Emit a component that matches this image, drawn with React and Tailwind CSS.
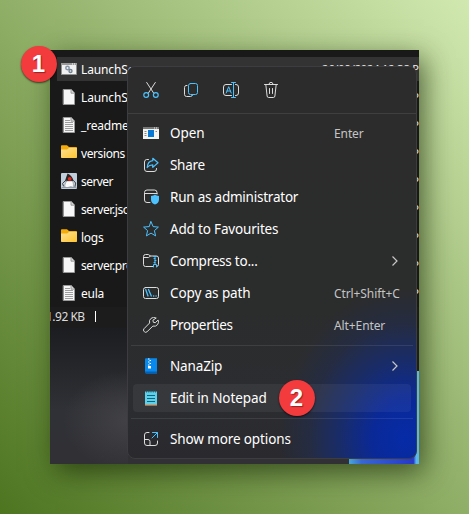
import React from "react";

const BLUE = "#4cc2ff";
const LINE = "#dcdcdc";

function Icon({ children, className = "" }) {
  return (
    <svg
      className={`size-4 shrink-0 ${className}`}
      viewBox="0 0 16 16"
      fill="none"
      stroke={LINE}
      strokeWidth="1"
      strokeLinecap="round"
      strokeLinejoin="round"
    >
      {children}
    </svg>
  );
}

const CutIcon = () => (
  <Icon>
    <path d="M3.7.5 10.6 11M12.3.5 5.4 11" />
    <circle cx="3.2" cy="13" r="2.4" stroke={BLUE} strokeWidth="1.2" />
    <circle cx="12.8" cy="13" r="2.4" stroke={BLUE} strokeWidth="1.2" />
  </Icon>
);
const CopyIcon = () => (
  <Icon>
    <path d="M4 3.500H3A2 2 0 0 0 1.500 5.500v7A2.100 2.100 0 0 0 3.500 14.500h4a2 2 0 0 0 2-1.500" />
    <rect x="5.5" y="1.5" width="9" height="11" rx="2" stroke={BLUE} />
  </Icon>
);
const RenameIcon = () => (
  <Icon>
    <path d="M8.5 2.5H3A2.5 2.5 0 0 0 .5 5v6A2.5 2.5 0 0 0 3 13.5h5.5M12.5 2.5h.5A2.5 2.5 0 0 1 15.500 5v6a2.500 2.500 0 0 1-2.500 2.500h-.5" />
    <path d="M3.200 11 5.700 4.700 8.200 11M4 9h3.400M10.500.5v15M8.500.5h4M8.500 15.500h4" stroke={BLUE} />
  </Icon>
);
const TrashIcon = () => (
  <Icon>
    <path d="M1.500 2.500h13M2.800 2.500l1.300 11.500a1.600 1.600 0 0 0 1.600 1.500h4.600a1.600 1.600 0 0 0 1.600-1.500L13.200 2.500M6 2.300a2 2 0 0 1 4 0M6.500 6.500v5M9.500 6.500v5" />
  </Icon>
);
const OpenIcon = () => (
  <Icon>
    <path d="M0 2h16v12H0z" fill="#f3f3f3" stroke="none" />
    <path d="M0 2h16v2H0z" fill="#777" stroke="none" />
    <path d="M11 3h1M13 3h1" stroke="#eee" strokeLinecap="butt" />
    <path d="M1.500 6.500h2M1.500 8.500h2M1.500 10.500h2M12.500 6.500H14" stroke="#888" strokeLinecap="butt" />
    <path d="M5 5h6v7H5z" fill="#0878d4" stroke="none" />
  </Icon>
);
const ShareIcon = () => (
  <Icon>
    <path d="M5.500 2.500H3.500a2.500 2.500 0 0 0-2 2.500v7A2.500 2.500 0 0 0 4 14.500h7a2.500 2.500 0 0 0 2.500-2.500v-.5" />
    <path d="M9.800 1.300 15 5.800l-5.200 4.600V7.900C7.300 7.900 5.600 8.700 4.200 10.500 4.500 6.500 6.500 4 9.800 3.700z" stroke={BLUE} strokeWidth="1.200" />
  </Icon>
);
const AdminIcon = () => (
  <Icon>
    <path d="M7 13.500H4A2.500 2.500 0 0 1 1.500 11V3.500A2.500 2.500 0 0 1 4 1h7.500A2.500 2.500 0 0 1 14 3.500V5M1.500 4.500H14" />
    <path d="M12 5.500c1.200 1 2.500 1.400 4 1.500v3.500c0 2.600-1.500 4.200-4 5-2.500-.8-4-2.400-4-5V7c1.500-.1 2.800-.5 4-1.500z" fill={BLUE} stroke="none" />
  </Icon>
);
const StarIcon = () => (
  <Icon>
    <path d="m8 .7 2.100 4.900 5.300.5-4 3.500 1.200 5.300L8 12.100l-4.600 2.800 1.200-5.300-4-3.500 5.300-.5z" stroke={BLUE} />
  </Icon>
);
const CompressIcon = () => (
  <Icon>
    <path d="M10 13.500H2.500a2 2 0 0 1-2-2v-8a2 2 0 0 1 2-2h2.800L7.500 3h6a2 2 0 0 1 2 2v6.500a2 2 0 0 1-2 2M.7 4.500h4.800l2-1.500" />
    <path d="M10.500 3.500h3M12 3.500v8M11 5.500h1M12 7.500h1M11 9.500h1M10.500 14v-2.500h3V14" stroke={BLUE} />
  </Icon>
);
const PathIcon = () => (
  <Icon>
    <rect x=".5" y="2.500" width="15" height="11" rx="2" />
    <path d="m2.700 4.500 2.300 6.500M5.500 4.500l2.800 6.500M10.500 11h.3M13 11h.2" stroke={BLUE} strokeWidth="1.300" />
  </Icon>
);
const WrenchIcon = () => (
  <Icon>
    <path d="M12.900.9A4.400 4.400 0 0 0 6.600 6L1 11.700a2 2 0 0 0 0 2.700l.3.300a2 2 0 0 0 2.800 0l5.800-5.600A4.400 4.400 0 0 0 15.100 3l-2.800 2.700-2-.4-.3-1.800z" />
  </Icon>
);
const ZipIcon = () => (
  <Icon>
    <path d="M2 1.500C2 .7 2.500.3 3.200.3H14v15.200H3.200C2.500 15.500 2 15 2 14.300z" fill="#0789ee" stroke="none" />
    <path d="M2 13.500h12v2H3.200C2.500 15.500 2 15 2 14.300z" fill="#0460b5" stroke="none" />
    <path d="M5 1h1.500M6.500 2.500H8M5 4h1.500M6.500 5.500H8M5 7h1.500" stroke="#fff" strokeLinecap="butt" strokeWidth="1.200" />
    <path d="M5 8h3v2.500H5z" fill="#fff" stroke="none" />
  </Icon>
);
const NotepadIcon = () => (
  <Icon>
    <path d="M2 1.500h12V15H2z" fill="#5fd0ea" stroke="none" />
    <path d="M2 14.500h12v1.200H2z" fill="#d68b52" stroke="none" />
    <path d="M3.500.7v1.800M5.800.7v1.800M8 .7v1.800M10.300.7v1.800M12.500.7v1.800" stroke="#176a80" strokeLinecap="butt" />
    <path d="M4 5.500h8M4 8.500h8M4 11.500h8" stroke="#0c6680" strokeLinecap="butt" strokeWidth="1" />
  </Icon>
);
const MoreIcon = () => (
  <Icon>
    <path d="M6 1.500H4A2.500 2.500 0 0 0 1.500 4v8A2.500 2.500 0 0 0 4 14.500h8a2.500 2.500 0 0 0 2.500-2.500V10M1.500 8.500H5a2 2 0 0 1 2 2v4" />
    <path d="M9.500 1.500h5v5M14.300 1.700 9 7" stroke={BLUE} />
  </Icon>
);

const PageIcon = ({ lined }) => (
  <Icon>
    <path d="M2.500.5h7.800L13.500 4v11.500h-11z" fill="#f7f7f7" stroke="#a0a0a0" strokeWidth=".8" />
    <path d="M10 .5V4.200h3.500" fill="#d8d8d8" stroke="#8b8b8b" strokeWidth=".8" />
    {lined && (
      <path d="M4 3.500h5M4 5.500h8M4 7.500h8M4 9.500h8M4 11.500h8M4 13.500h8" stroke="#858585" strokeLinecap="butt" strokeWidth=".8" />
    )}
  </Icon>
);
const FolderIcon = () => (
  <Icon>
    <defs>
      <linearGradient id="folder" x1="0" y1="0" x2="1" y2="1">
        <stop stopColor="#ffe093" />
        <stop offset="1" stopColor="#ffc52f" />
      </linearGradient>
    </defs>
    <path d="M0 1.200C0 .5.500.2 1 .2h5L8 2h7.200c.5 0 .8.300.8.800V8H0z" fill="#f5ab09" stroke="none" />
    <path d="M0 4.500h6L8 3h8v9c0 .6-.3 1-1 1H1c-.6 0-1-.4-1-1z" fill="url(#folder)" stroke="none" />
  </Icon>
);
const BatchIcon = () => (
  <Icon>
    <path d="M.5 2.500h15v11H.5z" fill="#f1f1f1" stroke="#8f8f8f" />
    <path d="M0 2h16v2H0z" fill="#999" stroke="none" />
    <path d="M11 3h1M13 3h1" stroke="#fff" strokeLinecap="butt" />
    <circle cx="6.500" cy="7" r="1.700" stroke="#8796a6" strokeWidth="1.500" />
    <circle cx="9.500" cy="10" r="1.500" stroke="#738292" strokeWidth="1.400" />
  </Icon>
);
const JavaIcon = () => (
  <Icon>
    <rect width="16" height="16" rx="1" fill="#bfcddd" stroke="none" />
    <path d="M6.500.5c2.500 1 5 3.500 6 7l-3 1.500-4-.5L4 8C4.800 5 5.800 3 6.500.5z" fill="#252525" stroke="none" />
    <path d="M5.500 8h6c1 2.500 1.200 4.500.5 6.500l-2-1-4 1.200-2-.6c-.5-2 .500-4 1.500-6.100z" fill="#fafafa" stroke="#777" strokeWidth=".5" />
    <path d="M4 8 1.500 10.500l1 2.500M12.500 7.500l2.200 2.500-.7 3.500" stroke="#444" />
    <path d="M1 14.500h14" stroke="#8d99a8" />
    <circle cx="8.700" cy="5.800" r="1.900" fill="#e32620" stroke="none" />
  </Icon>
);

const files = [
  { name: "LaunchServer", icon: <BatchIcon />, selected: true, track: "tracking-[-0.12px]" },
  { name: "LaunchServer", icon: <PageIcon />, track: "tracking-[-0.12px]" },
  { name: "_readme", icon: <PageIcon lined />, track: "tracking-[-0.2px]" },
  { name: "versions", icon: <FolderIcon />, track: "tracking-[-0.4px]" },
  { name: "server", icon: <JavaIcon />, track: "tracking-[-0.55px]" },
  { name: "server.json", icon: <PageIcon />, track: "tracking-[-0.4px]" },
  { name: "logs", icon: <FolderIcon />, track: "tracking-[-0.25px]" },
  { name: "server.properties", icon: <PageIcon />, track: "tracking-[-0.4px]" },
  { name: "eula", icon: <PageIcon lined />, track: "tracking-[-0.25px]" },
];

const commands = [
  { label: "Open", icon: <OpenIcon />, hint: "Enter", track: "tracking-[-0.1px]" },
  { label: "Share", icon: <ShareIcon />, track: "tracking-[-0.3px]" },
  { label: "Run as administrator", icon: <AdminIcon />, track: "tracking-[-0.23px]" },
  { label: "Add to Favourites", icon: <StarIcon />, track: "tracking-[-0.17px]" },
  { label: "Compress to...", icon: <CompressIcon />, more: true, track: "tracking-[-0.24px]" },
  { label: "Copy as path", icon: <PathIcon />, hint: "Ctrl+Shift+C", track: "tracking-[-0.1px]" },
  { label: "Properties", icon: <WrenchIcon />, hint: "Alt+Enter", track: "tracking-[-0.28px]" },
];

function FileRow({ file }) {
  return (
    <div className="h-7 pl-[7px] pt-[2px]">
      <div className={`flex h-6 items-center pl-1 ${file.selected ? "bg-[#333333]" : ""}`}>
        {file.icon}
        <span className={`ml-1 w-[241px] shrink-0 pt-[2px] text-[12px] leading-4 text-white ${file.track}`}>
          {file.name}
        </span>
        <span className="shrink-0 text-[11px] leading-4 tracking-[-0.12px] text-[#eeeeee]">
          26/09/2024 12:38 PM
        </span>
      </div>
    </div>
  );
}

function MenuRow({ icon, label, hint, more, active, track }) {
  return (
    <div className="flex h-8 items-center px-[5px]">
      <div className={`flex h-7 w-full items-center rounded pl-[10px] ${active ? "bg-white/[0.055]" : ""}`}>
        {icon}
        <span className={`ml-[11px] w-[164px] text-[13.5px] leading-5 text-white ${track}`}>
          {label}
        </span>
        {hint && <span className="pt-[2px] text-[12px] leading-4 tracking-[-0.1px] text-[#c4c4c4]">{hint}</span>}
        {more && (
          <svg className="ml-[57px] h-3 w-2" viewBox="0 0 8 12" fill="none" stroke="#c8c8c8" strokeWidth="1.200">
            <path d="m1.500 1.500 4.500 4.500-4.500 4.500" />
          </svg>
        )}
      </div>
    </div>
  );
}

function Divider() {
  return <div className="mx-[3px] h-px bg-white/[0.09]" />;
}

function Badge({ children, className }) {
  return (
    <div
      className={`absolute flex size-9 items-center justify-center rounded-full bg-[#f33b3d] pr-px font-['Liberation_Sans',sans-serif] text-[24px] font-bold leading-none text-white shadow-[0_1px_2px_rgba(0,0,0,0.65)] [text-shadow:1px_1px_1px_rgba(0,0,0,0.4)] ${className}`}
    >
      {children}
    </div>
  );
}

export default function App() {
  return (
    <main className="relative h-[514px] w-[469px] overflow-hidden bg-[linear-gradient(to_top_right,#4d7520_0%,#8dac64_48%,#d1e9b0_100%)] p-[50px] font-['Noto_Sans',sans-serif]">
      <section className="h-[414px] w-[369px] shadow-[5px_8px_26px_0px_rgba(20,35,5,0.65)]">
        <div className="relative flex h-full w-full flex-col overflow-hidden bg-[#191919]">
          <div className="pt-[5px]">
            {files.map((file, i) => (
              <FileRow key={i} file={file} />
            ))}
          </div>
          <div className="flex h-[21px] shrink-0 items-center gap-[10px] bg-[#1c1c1c] pb-[2px] text-[12px] leading-4 text-[#dcdcdc]">
            <span className="-ml-[4px] w-[39px] whitespace-nowrap tracking-[-0.5px]">1.92 KB</span>
            <span className="h-[11px] w-px bg-white" />
          </div>
          <div className="flex grow justify-between bg-[linear-gradient(180deg,#1c1d20,#303136_60%,#303035)]">
            <div className="w-[78px] bg-[radial-gradient(ellipse_65px_50px_at_100%_68%,#424246,transparent)]" />
            <div className="flex w-[70px] flex-col">
              <div className="h-[43px] bg-[#1d1e22]" />
              <div className="grow bg-[linear-gradient(90deg,#48a6d8_0%,#3867d2_18%,#2638c8_92%,#59b7ed_96%)]" />
            </div>
          </div>

          <nav className="absolute left-[77px] top-[16px] h-[393px] w-[290px] rounded-lg border border-[#3d3d3f] bg-[#2c2c2c] bg-[radial-gradient(ellipse_125px_150px_at_96%_95%,#062ba7_0%,#0a2998_25%,#182c6c_50%,#252c42_76%,transparent_100%),linear-gradient(180deg,#2c2c2c_0%,#2b2c2c_62%,#2c2d31_85%,#29292e_100%)]">
            <div className="flex h-[46px] items-center gap-6 pl-[15px]">
              <CutIcon />
              <CopyIcon />
              <RenameIcon />
              <TrashIcon />
            </div>
            <div className="h-px bg-white/[0.09]" />
            <div className="pb-[4px] pt-[3px]">
              {commands.map((item) => (
                <MenuRow key={item.label} {...item} />
              ))}
            </div>
            <Divider />
            <div className="py-[4px]">
              <MenuRow icon={<ZipIcon />} label="NanaZip" more track="tracking-[-0.15px]" />
              <MenuRow icon={<NotepadIcon />} label="Edit in Notepad" active track="tracking-[-0.1px]" />
            </div>
            <Divider />
            <div className="pt-[4px]">
              <MenuRow icon={<MoreIcon />} label="Show more options" track="tracking-[-0.12px]" />
            </div>
          </nav>
        </div>
      </section>
      <Badge className="left-[21px] top-[46px]">1</Badge>
      <Badge className="left-[279px] top-[380px]">2</Badge>
    </main>
  );
}
